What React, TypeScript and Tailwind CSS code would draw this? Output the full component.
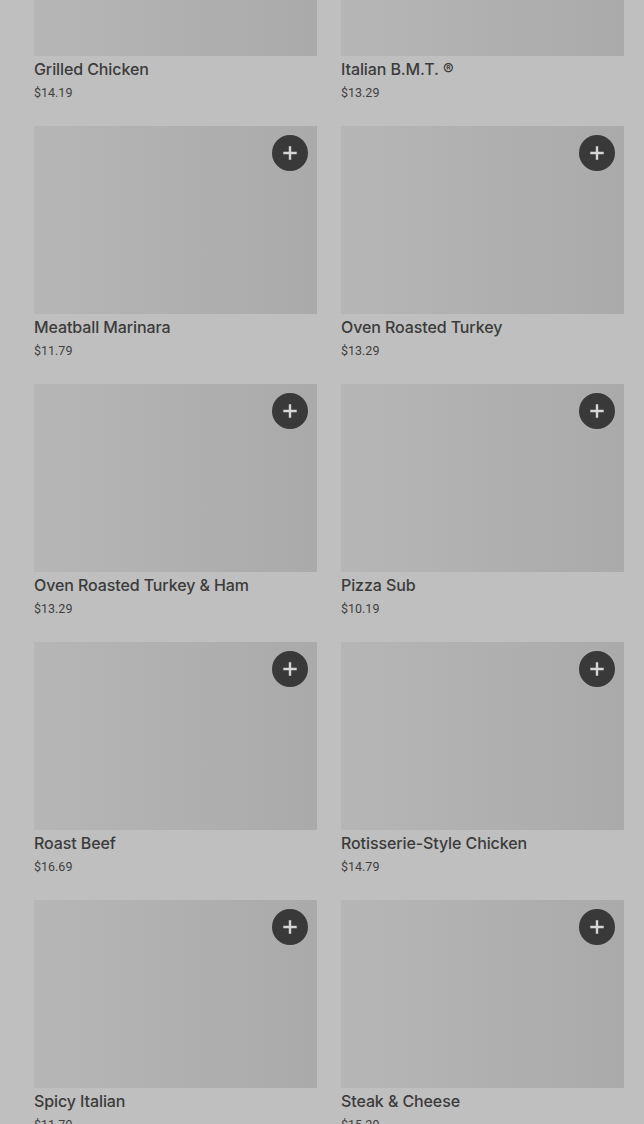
import React from 'react';

const items = [
  { name: 'Grilled Chicken', price: '$14.19' },
  { name: 'Italian B.M.T. ®', price: '$13.29' },
  { name: 'Meatball Marinara', price: '$11.79' },
  { name: 'Oven Roasted Turkey', price: '$13.29' },
  { name: 'Oven Roasted Turkey & Ham', price: '$13.29' },
  { name: 'Pizza Sub', price: '$10.19' },
  { name: 'Roast Beef', price: '$16.69' },
  { name: 'Rotisserie-Style Chicken', price: '$14.79' },
  { name: 'Spicy Italian', price: '$11.79' },
  { name: 'Steak & Cheese', price: '$15.29' },
];

const PlusIcon: React.FC = () => (
  <svg width="14" height="14" viewBox="0 0 14 14" fill="none">
    <path d="M7 1.5v11M1.5 7h11" stroke="#d6d6d6" strokeWidth="2.4" strokeLinecap="square" />
  </svg>
);

const App: React.FC = () => {
  return (
    <div
      className="h-[1124px] overflow-hidden bg-[#bfbfbf]"
      style={{ fontFamily: 'Roboto, "Noto Sans", Arial, sans-serif' }}
    >
      <div className="-mt-[132px] pl-[34px] pr-[20px] grid grid-cols-2 gap-x-6 gap-y-[12px]">
        {items.map((item, i) => (
          <div key={i} className="h-[246px]">
            <div className="relative h-[188px] bg-gradient-to-r from-[#b6b6b6] to-[#aaaaaa]">
              {i > 1 && (
                <button className="absolute top-[9px] right-[9px] w-9 h-9 rounded-full bg-[#393939] flex items-center justify-center">
                  <PlusIcon />
                </button>
              )}
            </div>
            <div className="pt-[3px] text-[16px] leading-[20px] font-medium text-[#3b3b3b] font-['Inter',sans-serif] tracking-[-0.1px]">
              {item.name}
            </div>
            <div className="pt-[6px] text-[12.5px] leading-[16px] text-[#3f3f3f]">{item.price}</div>
          </div>
        ))}
      </div>
    </div>
  );
};

export default App;
